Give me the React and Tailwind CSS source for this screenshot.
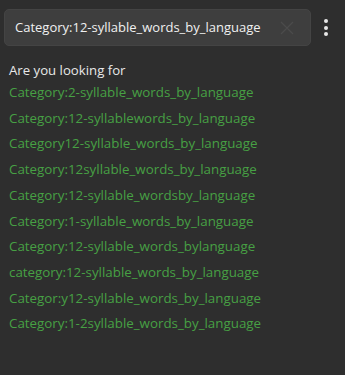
import React from "react";

const items = [
  "Category:2-syllable_words_by_language",
  "Category:12-syllablewords_by_language",
  "Category12-syllable_words_by_language",
  "Category:12syllable_words_by_language",
  "Category:12-syllable_wordsby_language",
  "Category:1-syllable_words_by_language",
  "Category:12-syllable_words_bylanguage",
  "category:12-syllable_words_by_language",
  "Categor:y12-syllable_words_by_language",
  "Category:1-2syllable_words_by_language",
];

export default function App() {
  return (
    <div className="w-[345px] h-[375px] bg-[#2e2e2e] overflow-hidden" style={{ fontFamily: '"Open Sans", sans-serif' }}>
      <div className="flex items-center pt-[9px] pl-[4px]">
        <div className="w-[307px] h-[37px] rounded-[5px] bg-[#3e3e3e] border border-[#444] flex items-center pl-[10px] pr-[10px]">
          <span className="text-[13px] text-[#f0f0f0] flex-1 whitespace-nowrap">Category:12-syllable_words_by_language</span>
          <svg width="16" height="16" viewBox="0 0 16 16" className="mr-[5px]">
            <path d="M2 2 L14 14 M14 2 L2 14" stroke="#4c4c4c" strokeWidth="1.1" />
          </svg>
        </div>
        <div className="flex flex-col items-center gap-[2.5px] ml-[13px]">
          <div className="w-[4px] h-[4px] rounded-full bg-[#e8e8e8]" />
          <div className="w-[4px] h-[4px] rounded-full bg-[#e8e8e8]" />
          <div className="w-[4px] h-[4px] rounded-full bg-[#e8e8e8]" />
        </div>
      </div>
      <div className="pl-[9px] pt-[14px]">
        <div className="text-[13.2px] text-[#e8e8e8] leading-[20px]">Are you looking for</div>
        <div className="flex flex-col">
          {items.map((t) => (
            <div key={t} className="text-[13.35px] text-[#47a044] leading-[25.7px] whitespace-nowrap">{t}</div>
          ))}
        </div>
      </div>
    </div>
  );
}
